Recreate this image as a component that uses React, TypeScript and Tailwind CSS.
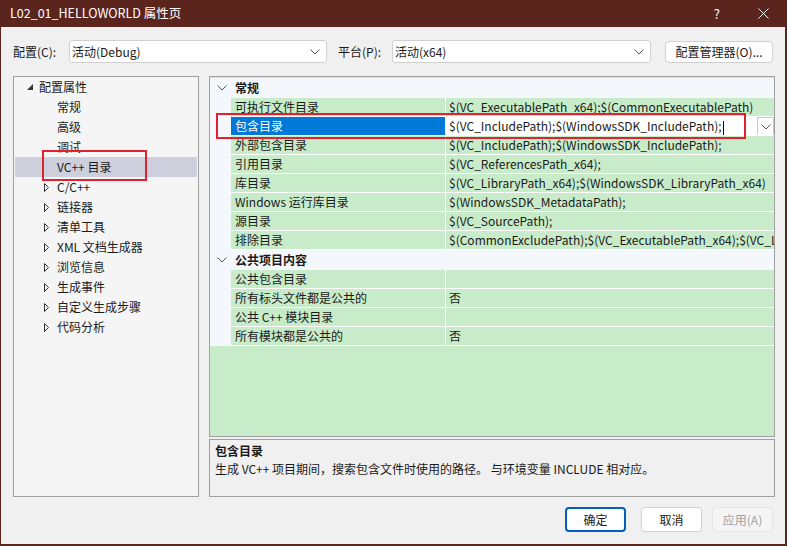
import React from "react";

const tree = [
  "常规",
  "高级",
  "调试",
  "VC++ 目录",
  "C/C++",
  "链接器",
  "清单工具",
  "XML 文档生成器",
  "浏览信息",
  "生成事件",
  "自定义生成步骤",
  "代码分析",
];

const general: [string, string][] = [
  ["可执行文件目录", "$(VC_ExecutablePath_x64);$(CommonExecutablePath)"],
  ["包含目录", "$(VC_IncludePath);$(WindowsSDK_IncludePath);"],
  ["外部包含目录", "$(VC_IncludePath);$(WindowsSDK_IncludePath);"],
  ["引用目录", "$(VC_ReferencesPath_x64);"],
  ["库目录", "$(VC_LibraryPath_x64);$(WindowsSDK_LibraryPath_x64)"],
  ["Windows 运行库目录", "$(WindowsSDK_MetadataPath);"],
  ["源目录", "$(VC_SourcePath);"],
  ["排除目录", "$(CommonExcludePath);$(VC_ExecutablePath_x64);$(VC_LibraryPath_x64)"],
];

const publicItems: [string, string][] = [
  ["公共包含目录", ""],
  ["所有标头文件都是公共的", "否"],
  ["公共 C++ 模块目录", ""],
  ["所有模块都是公共的", "否"],
];

const Chevron = ({ className = "" }: { className?: string }) => (
  <svg width="10" height="6" viewBox="0 0 10 6" className={className}>
    <polyline points="0.5,0.5 5,5 9.5,0.5" fill="none" stroke="#555" strokeWidth="1" />
  </svg>
);

const Combo = ({ text, width }: { text: string; width: string }) => (
  <div className={`${width} shrink-0 h-[23px] bg-white border border-[#d0d0d0] rounded-[3px] flex items-center pl-[2px] pr-[6px]`}>
    <span className="flex-1">{text}</span>
    <Chevron />
  </div>
);

const CategoryRow = ({ label }: { label: string }) => (
  <div className="h-[20px] shrink-0 bg-[#f4f7fc] flex items-center">
    <div className="w-[22px] flex justify-center pl-[2px]">
      <Chevron />
    </div>
    <span className="font-bold pl-[3px]">{label}</span>
  </div>
);

const PropRow = ({ name, value, selected }: { name: string; value: string; selected?: boolean }) => (
  <div className="h-[19px] shrink-0 flex bg-[#f4f7fc]">
    <div className="w-[21px] shrink-0" />
    <div
      className={
        "w-[214px] shrink-0 border-b border-white pl-[4px] leading-[18px] whitespace-nowrap overflow-hidden " +
        (selected ? "bg-[#0078d7] text-white" : "bg-[#c8ecca]")
      }
    >
      {name}
    </div>
    <div className="w-[1px] bg-white shrink-0" />
    <div
      className={
        "flex-1 min-w-0 border-b border-white pl-[3px] leading-[18px] whitespace-nowrap overflow-hidden relative " +
        (selected ? "bg-white" : "bg-[#c8ecca]")
      }
    >
      {value}
      {selected && <span className="inline-block w-[1px] h-[14px] bg-black align-middle ml-[1px]" />}
      {selected && (
        <div className="absolute right-0 top-0 w-[17px] h-[19px] bg-white border border-[#c8c8c8] flex items-center justify-center">
          <Chevron />
        </div>
      )}
    </div>
  </div>
);

const Button = ({ label, variant }: { label: string; variant: "primary" | "normal" | "disabled" }) => (
  <div
    className={
      "w-[61px] h-[25px] rounded-[4px] flex items-center justify-center " +
      (variant === "primary"
        ? "bg-white border-2 border-[#005fb8]"
        : variant === "normal"
        ? "bg-white border border-[#d0d0d0]"
        : "bg-[#f5f5f5] border border-[#e5e5e5] text-[#a0a0a0]")
    }
  >
    {label}
  </div>
);

export default function App() {
  return (
    <div className="w-[787px] h-[546px] bg-[#5b241d] flex flex-col text-[12px] text-[#1a1a1a] font-['Noto_Sans_CJK_SC',sans-serif] overflow-hidden">
      {/* title bar */}
      <div className="h-[27px] flex items-center text-white pl-[10px] pr-[18px] shrink-0">
        <span className="flex-1 text-[12.5px]">L02_01_HELLOWORLD 属性页</span>
        <span className="mr-[38px] text-[13px]">?</span>
        <svg width="11" height="11" viewBox="0 0 11 11">
          <path d="M0.5 0.5 L10.5 10.5 M10.5 0.5 L0.5 10.5" stroke="white" strokeWidth="1" />
        </svg>
      </div>

      <div className="flex-1 bg-[#f0f0f0] ml-[1px] mr-[2px] mb-[2px] flex flex-col pl-[12px] pr-[10px] relative">
        {/* config row */}
        <div className="flex items-center mt-[13px] h-[23px] whitespace-nowrap">
          <span className="w-[56px] shrink-0">配置(C):</span>
          <Combo text="活动(Debug)" width="w-[258px]" />
          <span className="ml-[11px] w-[54px] shrink-0">平台(P):</span>
          <Combo text="活动(x64)" width="w-[259px]" />
          <div className="ml-[14px] w-[108px] shrink-0 h-[22px] bg-white border border-[#d0d0d0] rounded-[4px] flex items-center justify-center">
            配置管理器(O)...
          </div>
        </div>

        {/* main */}
        <div className="flex mt-[13px] h-[421px]">
          <div className="w-[186px] shrink-0 h-full border border-[#a0a0a0] bg-[#f5f5f5] px-[1px] whitespace-nowrap">
            <div className="h-[20px] flex items-center">
              <svg width="6" height="6" viewBox="0 0 6 6" className="ml-[12px]">
                <polygon points="6,0 6,6 0,6" fill="#333" />
              </svg>
              <span className="ml-[6px]">配置属性</span>
            </div>
            {tree.map((t, i) => (
              <div
                key={t}
                className={"h-[20px] flex items-center " + (i === 3 ? "bg-[#cdd0dc]" : "")}
              >
                <div className="w-[42px] shrink-0 flex justify-end pr-[8px]">
                  {i >= 4 && (
                    <svg width="5" height="9" viewBox="0 0 5 9">
                      <polygon points="0.5,0.5 4.5,4.5 0.5,8.5" fill="none" stroke="#333" strokeWidth="1" />
                    </svg>
                  )}
                </div>
                <span>{t}</span>
              </div>
            ))}
          </div>

          <div className="ml-[10px] flex-1 min-w-0 flex flex-col">
            <div className="h-[361px] border border-[#a0a0a0] bg-[#c8ecca] flex flex-col overflow-hidden pt-[1px]">
              <CategoryRow label="常规" />
              {general.map(([n, v], i) => (
                <PropRow key={n} name={n} value={v} selected={i === 1} />
              ))}
              <CategoryRow label="公共项目内容" />
              {publicItems.map(([n, v]) => (
                <PropRow key={n} name={n} value={v} />
              ))}
            </div>
            <div className="mt-[2px] h-[58px] border border-[#a0a0a0] px-[5px] pt-[2px] leading-[18px] whitespace-nowrap">
              <div className="font-bold">包含目录</div>
              <div>生成 VC++ 项目期间，搜索包含文件时使用的路径。 与环境变量 INCLUDE 相对应。</div>
            </div>
          </div>
        </div>

        {/* buttons */}
        <div className="flex justify-end mt-[10px] pr-[2px]">
          <Button label="确定" variant="primary" />
          <div className="ml-[15px]">
            <Button label="取消" variant="normal" />
          </div>
          <div className="ml-[10px]">
            <Button label="应用(A)" variant="disabled" />
          </div>
        </div>

        {/* red annotation boxes */}
        <div className="absolute left-[41px] top-[123px] w-[105px] h-[31px] border-2 border-[#e5202e]" />
        <div className="absolute left-[215px] top-[86px] w-[530px] h-[26px] border-2 border-[#e5202e]" />
      </div>
    </div>
  );
}
